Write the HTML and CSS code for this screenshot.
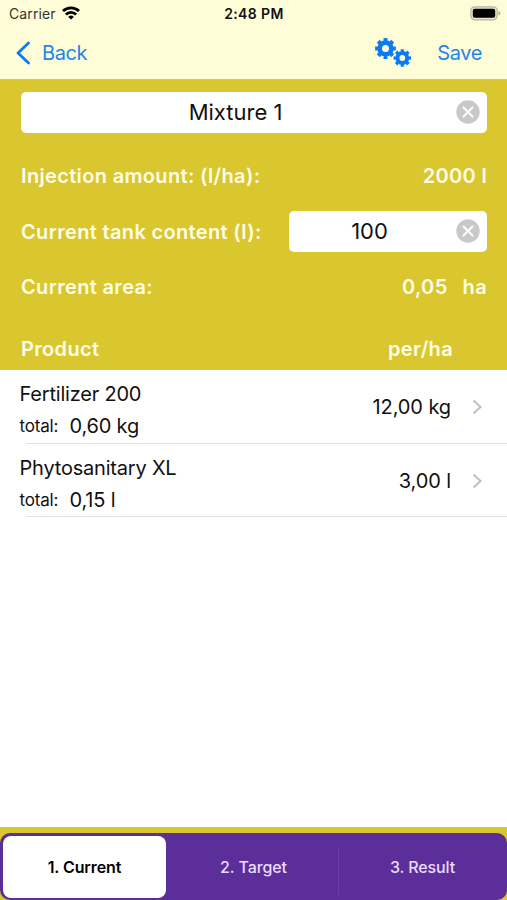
FILE: index.html
```html
<!DOCTYPE html>
<html lang="en">

<head>
  <meta charset="UTF-8" />
  <meta name="viewport" content="width=device-width, initial-scale=1.0" />
  <title>Mixture 1</title>
  <link rel="stylesheet" href="styles.css">
</head>

<body>
  <div class="screen">
    <header class="header">
      <div class="status-bar">
        <div class="carrier">
          <span>Carrier</span>
          <svg class="wifi" width="18" height="14" viewBox="0 0 18 14" fill="none" stroke="#000" stroke-width="2.8">
            <path d="M1 5.1a11.4 11.4 0 0 1 16 0" />
            <path d="M3.9 8.4a7.2 7.2 0 0 1 10.2 0" />
            <path d="M9 13.6L6.2 10.9a4 4 0 0 1 5.6 0z" fill="#000" stroke="none" />
          </svg>
        </div>
        <span class="time">2:48 PM</span>
        <svg class="battery" width="31" height="15" viewBox="0 0 31 15">
          <rect x="0.8" y="0.8" width="26.4" height="13" rx="4" fill="#e9e7c8" stroke="#b5b49e" stroke-width="1.2" />
          <rect x="2.8" y="2.8" width="22.4" height="9" rx="2" fill="#000" />
          <path d="M28.5 5v4.6c1.2-.5 1.9-1.3 1.9-2.3s-.7-1.8-1.9-2.3z" fill="#aaa996" />
        </svg>
      </div>
      <nav class="nav-bar">
        <a class="back">
          <svg width="15" height="24" viewBox="0 0 15 24" fill="none" stroke="#087bf5" stroke-width="2.8" stroke-linecap="round" stroke-linejoin="round">
            <path d="M13.5 2L3 12l10.5 10" />
          </svg>
          <span>Back</span>
        </a>
        <svg class="gears" width="38" height="32" viewBox="0 0 38 32" fill="none" stroke="#087bf5">
          <circle cx="11.5" cy="11.5" r="5.9" stroke-width="4.8" />
          <circle cx="11.5" cy="11.5" r="8.7" stroke-width="3.4" pathLength="16" stroke-dasharray="1.1 0.9" stroke-dashoffset="0.55" />
          <circle cx="28.3" cy="21" r="4.9" stroke-width="4" />
          <circle cx="28.3" cy="21" r="7.3" stroke-width="3" pathLength="16" stroke-dasharray="1.1 0.9" stroke-dashoffset="0.55" />
        </svg>
        <a class="save">Save</a>
      </nav>
    </header>

    <section class="panel">
      <div class="field">
        <span class="field-value">Mixture 1</span>
        <svg class="clear" width="24" height="24" viewBox="0 0 24 24">
          <circle cx="12" cy="12" r="11.7" fill="#c9c9cb" />
          <path d="M7.5 7.5l9 9m0-9l-9 9" stroke="#fff" stroke-width="2" stroke-linecap="round" />
        </svg>
      </div>
      <div class="row">
        <span>Injection amount: (l/ha):</span>
        <span>2000 l</span>
      </div>
      <div class="row">
        <span>Current tank content (l):</span>
        <div class="field field-small">
          <span class="field-value">100</span>
          <svg class="clear" width="24" height="24" viewBox="0 0 24 24">
            <circle cx="12" cy="12" r="11.7" fill="#c9c9cb" />
            <path d="M7.5 7.5l9 9m0-9l-9 9" stroke="#fff" stroke-width="2" stroke-linecap="round" />
          </svg>
        </div>
      </div>
      <div class="row">
        <span>Current area:</span>
        <span class="area"><span>0,05</span><span>ha</span></span>
      </div>
      <div class="row row-head">
        <span>Product</span>
        <span>per/ha</span>
      </div>
    </section>

    <main class="product-list">
      <div class="product">
        <div class="product-info">
          <div class="product-name">Fertilizer 200</div>
          <div class="product-total"><span class="total-label">total:</span><span>0,60 kg</span></div>
        </div>
        <span class="product-rate">12,00 kg</span>
        <svg class="chevron" width="11" height="16" viewBox="0 0 11 16">
          <path d="M1.5 1.5L8.500 8l-7 6.500" />
        </svg>
      </div>
      <div class="product">
        <div class="product-info">
          <div class="product-name">Phytosanitary XL</div>
          <div class="product-total"><span class="total-label">total:</span><span>0,15 l</span></div>
        </div>
        <span class="product-rate">3,00 l</span>
        <svg class="chevron" width="11" height="16" viewBox="0 0 11 16">
          <path d="M1.5 1.5L8.500 8l-7 6.500" />
        </svg>
      </div>
    </main>

    <footer class="footer">
      <div class="tabs">
        <div class="tab active">1. Current</div>
        <div class="tab">2. Target</div>
        <div class="tab tab-divided">3. Result</div>
      </div>
    </footer>
  </div>
</body>

</html>
```
FILE: styles.css
```css
:root {
  --color-header: #fffdd8;
  --color-panel: #dac62e;
  --color-label: #fffde6;
  --color-link: #1c86ec;
  --color-purple: #5c2e99;
  --color-border: #e4e4e4;
  --font-base: Inter, "Liberation Sans", sans-serif;
}

* {
  box-sizing: border-box;
  margin: 0;
  padding: 0;
}

body {
  font-family: var(--font-base);
  background-color: #fff;
  color: #111;
}

.screen {
  display: flex;
  flex-direction: column;
  height: 100vh;
  overflow: hidden;
}

/* header */
.header {
  height: 80px;
  background-color: var(--color-header);
  border-bottom: 1px solid #d9c95a;
}

.status-bar {
  display: grid;
  grid-template-columns: 1fr auto 1fr;
  align-items: center;
  height: 27px;
  padding: 0 6px 0 9px;
  font-size: 14px;
}

.carrier {
  display: flex;
  align-items: center;
  gap: 6px;
  color: #333;
  letter-spacing: 0.1px;
}

.wifi {
  margin-top: -2px;
}

.time {
  margin-right: 2px;
  color: #111;
  font-weight: 600;
  letter-spacing: 0.4px;
}

.battery {
  justify-self: end;
}

.nav-bar {
  display: flex;
  align-items: center;
  height: 51px;
  padding: 0 25px 0 15px;
  font-size: 20px;
  letter-spacing: -0.4px;
  color: var(--color-link);
}

.back {
  display: flex;
  align-items: center;
  gap: 12px;
}

.gears {
  margin: 0 25px 0 auto;
}

/* yellow panel */
.panel {
  height: 290px;
  padding: 12px 20px 0 21px;
  background-color: var(--color-panel);
  color: var(--color-label);
  font-size: 20px;
  font-weight: 600;
  letter-spacing: 0.34px;
}

.field {
  display: flex;
  align-items: center;
  height: 41px;
  padding-right: 7px;
  border-radius: 5px;
  background-color: #fff;
  color: #111;
  font-size: 22px;
  font-weight: 400;
  letter-spacing: 0;
}

.field-small {
  width: 198px;
}

.field-value {
  flex: 1;
  padding: 0 6px 1px 0;
  text-align: center;
}

.clear {
  margin-top: -1px;
}

.row {
  display: flex;
  align-items: center;
  justify-content: space-between;
  height: 55.5px;
}

.field + .row {
  margin-top: 15.5px;
}

.row-head {
  height: 67px;
  padding-right: 34px;
}

.area {
  display: flex;
  gap: 15px;
}

/* products */
.product-list {
  flex: 1;
}

.product {
  position: relative;
  display: flex;
  align-items: center;
  height: 73.5px;
  padding: 1px 24px 0 19.5px;
  font-size: 20px;
}

.product::after {
  content: "";
  position: absolute;
  left: 26px;
  right: 0;
  bottom: 0;
  height: 1px;
  background-color: var(--color-border);
}

.product-info {
  flex: 1;
  padding-top: 6px;
  letter-spacing: -0.2px;
}

.product-name {
  line-height: 32px;
}

.product-total {
  display: flex;
  align-items: center;
  gap: 11.5px;
  line-height: 32px;
}

.total-label {
  font-size: 17px;
}

.product-rate {
  letter-spacing: -0.1px;
}

.chevron {
  margin-left: 21px;
  fill: none;
  stroke: #c4c4c6;
  stroke-width: 2.2;
}

/* bottom tabs */
.footer {
  height: 73px;
  padding-top: 6px;
  background-color: var(--color-panel);
}

.tabs {
  display: grid;
  grid-template-columns: 169px 169px 169px;
  height: 67px;
  border-radius: 10px;
  background-color: var(--color-purple);
}

.tab {
  position: relative;
  display: flex;
  align-items: center;
  justify-content: center;
  margin: 3px 0 2px;
  border-radius: 8px;
  color: #ebdcff;
  font-size: 16px;
  font-weight: 500;
  letter-spacing: -0.1px;
}

.tab.active {
  margin-left: 3px;
  margin-right: 3px;
  background-color: #fff;
  color: #000;
  font-weight: 600;
}

.tab-divided::before {
  content: "";
  position: absolute;
  top: 12px;
  bottom: 3px;
  left: 0;
  width: 1px;
  background-color: #6a3fa3;
}
```
